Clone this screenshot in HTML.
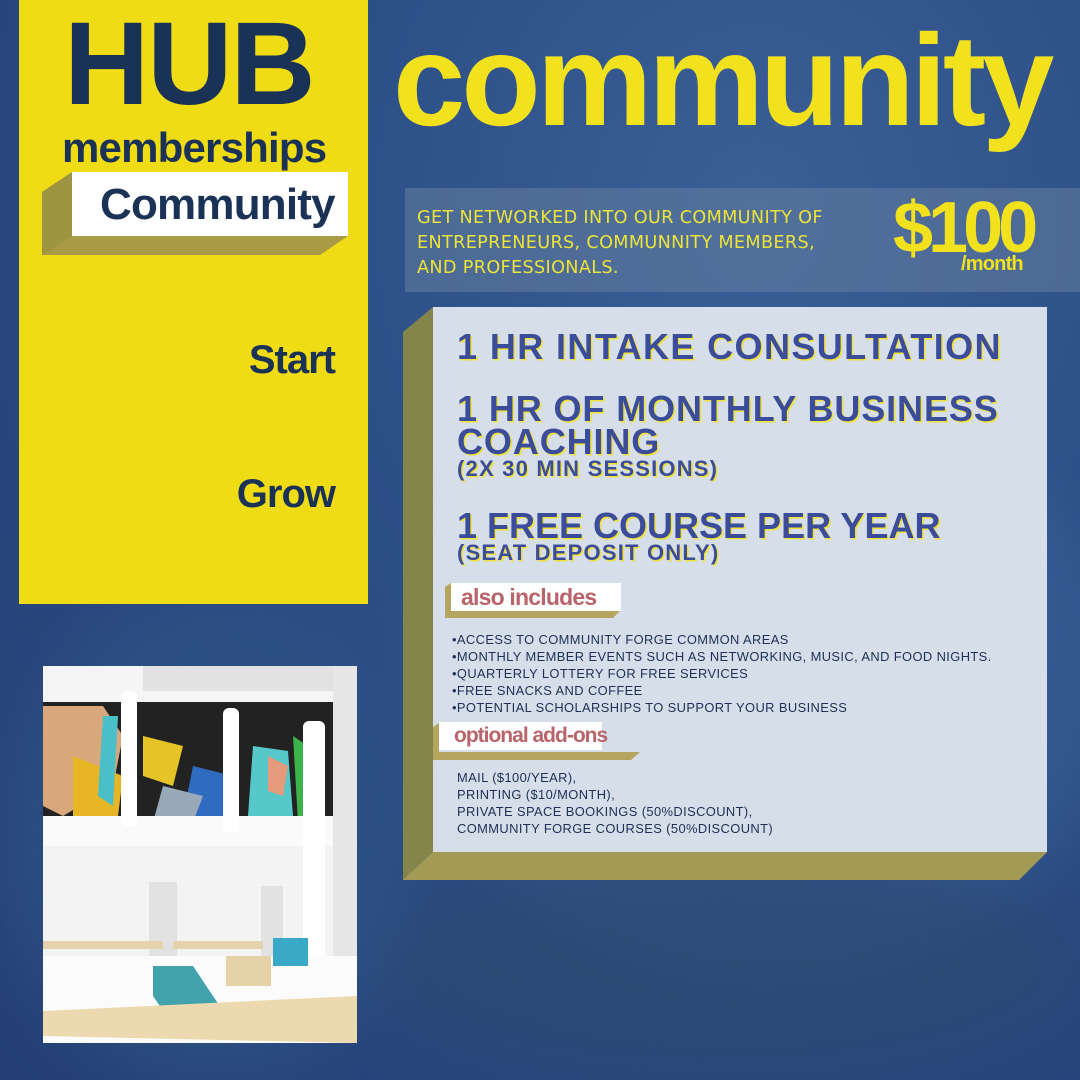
<!DOCTYPE html>
<html><head><meta charset="utf-8"><style>
*{margin:0;padding:0;box-sizing:border-box}
html,body{width:1080px;height:1080px;overflow:hidden}
body{position:relative;font-family:"Liberation Sans",sans-serif;
background:radial-gradient(ellipse at 70% 20%,#3b5f96 0%,#2d4f88 40%,#243f74 100%);}
.abs{position:absolute}
.bgs{position:absolute;border-radius:50%;filter:blur(30px);}
.yellow{left:19px;top:0;width:349px;height:604px;background:#f0dc14}
.navy{color:#1b3257;font-weight:bold}
.hub{left:64px;top:5px;font-size:118px;letter-spacing:-2px;line-height:118px;white-space:nowrap}
.mem{left:62px;top:126px;font-size:42px;letter-spacing:-.8px;line-height:44px;white-space:nowrap}
.nav{right:745px;font-size:40px;letter-spacing:-1px;text-align:right}
.ybig{color:#f2e21e;font-weight:bold;white-space:nowrap}
.band{left:405px;top:188px;width:675px;height:104px;background:rgba(100,125,160,.55)}
.desc{left:417px;top:206px;font-size:17.5px;line-height:25px;color:#ece437;letter-spacing:.3px;font-family:"DejaVu Sans Condensed","Liberation Sans Narrow",sans-serif;transform:scaleX(1.12);transform-origin:left;white-space:nowrap}
.panel{left:433px;top:307px;width:614px;height:545px;background:rgba(226,232,240,.93)}
.h{color:#3b4c9b;font-weight:bold;text-shadow:1.5px 1.5px 0 #efe23a;letter-spacing:1.2px;white-space:nowrap}
.tag{background:#fff;color:#b9636a;font-weight:bold;font-size:22px;letter-spacing:-.8px;padding:0 8px 0 10px;height:28px;line-height:28px;white-space:nowrap}
.li{font-size:12.9px;line-height:17px;color:#1f2f55;letter-spacing:.4px;white-space:nowrap}
</style></head><body>
<div class="bgs" style="left:420px;top:380px;width:700px;height:600px;background:#3c6299;opacity:.5"></div>
<div class="bgs" style="left:360px;top:850px;width:720px;height:230px;background:#2c4a72;opacity:.7"></div>
<div class="bgs" style="left:0;top:600px;width:420px;height:480px;background:#2f5486;opacity:.6"></div>

<div class="abs yellow"></div>
<div class="abs navy hub">HUB</div>
<div class="abs navy mem">memberships</div>
<svg class="abs" style="left:42px;top:172px" width="308" height="85"><polygon points="30,0 0,20 0,83 278,83 306,64 30,64" fill="#a99a45"/><polygon points="0,20 30,0 30,64 0,83" fill="#9c9440"/><rect x="30" y="0" width="276" height="64" fill="#fff"/></svg>
<div class="abs navy" style="left:100px;top:180px;font-size:44px;letter-spacing:-.8px;line-height:50px">Community</div>
<div class="abs navy nav" style="top:336px;line-height:48px">Start</div>
<div class="abs navy nav" style="top:470px;line-height:48px">Grow</div>

<div class="abs ybig" style="left:393px;top:5px;font-size:130px;letter-spacing:-4px;line-height:150px">community</div>

<div class="abs band"></div>
<div class="abs desc">GET NETWORKED INTO OUR COMMUNITY OF<br>ENTREPRENEURS, COMMUNNITY MEMBERS,<br>AND PROFESSIONALS.</div>
<div class="abs ybig" style="left:893px;top:186px;font-size:72px;letter-spacing:-5px;line-height:84px">$100</div>
<div class="abs ybig" style="left:961px;top:253px;font-size:20px;letter-spacing:-.8px">/month</div>

<svg class="abs" style="left:403px;top:307px" width="646" height="575"><polygon points="30,0 0,25 0,573 616,573 644,545 30,545" fill="#8c8a45" opacity=".92"/><polygon points="0,573 30,545 644,545 616,573" fill="#a29a55"/></svg>
<div class="abs panel"></div>
<div class="abs h" style="left:457px;top:327px;font-size:36px;letter-spacing:1.4px;line-height:40px">1 HR INTAKE CONSULTATION</div>
<div class="abs h" style="left:457px;top:392px;font-size:36px;letter-spacing:.9px;line-height:33px">1 HR OF MONTHLY BUSINESS<br>COACHING</div>
<div class="abs h" style="left:457px;top:456px;font-size:22px;line-height:26px">(2X 30 MIN SESSIONS)</div>
<div class="abs h" style="left:457px;top:507px;font-size:36px;letter-spacing:0;line-height:38px">1 FREE COURSE PER YEAR</div>
<div class="abs h" style="left:457px;top:540px;font-size:22px;line-height:26px">(SEAT DEPOSIT ONLY)</div>

<svg class="abs" style="left:445px;top:583px" width="180" height="40"><polygon points="6,0 0,4 0,35 168,35 175,28 6,28" fill="#b6a560"/></svg>
<div class="abs tag" style="left:451px;top:583px;width:170px;font-size:23px">also includes</div>
<div class="abs li" style="left:452px;top:631px">•ACCESS TO COMMUNITY FORGE COMMON AREAS<br>•MONTHLY MEMBER EVENTS SUCH AS NETWORKING, MUSIC, AND FOOD NIGHTS.<br>•QUARTERLY LOTTERY FOR FREE SERVICES<br>•FREE SNACKS AND COFFEE<br>•POTENTIAL SCHOLARSHIPS TO SUPPORT YOUR BUSINESS</div>
<svg class="abs" style="left:433px;top:723px" width="240" height="40"><polygon points="6,0 0,4 0,37 198,37 207,29 6,29" fill="#b6a560"/></svg>
<div class="abs tag" style="left:439px;top:722px;width:163px;padding-left:15px;font-size:21px;letter-spacing:-1px">optional add-ons</div>
<div class="abs li" style="left:457px;top:769px">MAIL ($100/YEAR),<br>PRINTING ($10/MONTH),<br>PRIVATE SPACE BOOKINGS (50%DISCOUNT),<br>COMMUNITY FORGE COURSES (50%DISCOUNT)</div>

<svg class="abs" style="left:43px;top:666px" width="314" height="377" viewBox="0 0 314 377">
<rect width="314" height="377" fill="#f3f3f3"/>
<rect x="0" y="36" width="290" height="120" fill="#222"/>
<path d="M0 40 L60 40 L80 70 L70 120 L20 150 L0 140Z" fill="#d9a77c"/>
<path d="M30 90 L80 110 L75 150 L30 150Z" fill="#e6b626"/>
<path d="M60 50 L75 50 L70 140 L55 130Z" fill="#49c0c7"/>
<path d="M100 70 L140 80 L130 120 L100 110Z" fill="#e6c326"/>
<path d="M150 100 L190 110 L180 150 L140 150Z" fill="#2f6cc0"/>
<path d="M120 120 L160 130 L150 156 L110 156Z" fill="#9aa9b8"/>
<path d="M210 80 L245 85 L250 150 L205 150Z" fill="#57c8c9"/>
<path d="M225 90 L245 100 L240 130 L225 125Z" fill="#e59a7b"/>
<path d="M250 70 L280 90 L270 156 L255 156Z" fill="#3bb24a"/>
<rect x="100" y="0" width="190" height="25" fill="#333"/>
<rect x="0" y="0" width="314" height="36" fill="#f5f5f5" opacity=".9"/>
<rect x="0" y="150" width="314" height="30" fill="#fafafa"/>
<rect x="78" y="25" width="16" height="135" rx="6" fill="#fff"/>
<rect x="180" y="42" width="16" height="125" rx="6" fill="#fff"/>
<rect x="260" y="55" width="22" height="250" rx="6" fill="#fff"/>
<rect x="290" y="0" width="24" height="377" fill="#e6e6e6"/>
<rect x="106" y="216" width="28" height="80" fill="#e2e2e2"/>
<rect x="218" y="220" width="22" height="80" fill="#e2e2e2"/>
<rect x="0" y="290" width="314" height="87" fill="#fbfbfb"/>
<rect x="0" y="275" width="120" height="8" fill="#e4d3ad"/>
<rect x="130" y="275" width="90" height="8" fill="#e4d3ad"/>
<path d="M110 300 L150 300 L180 345 L125 352 L110 330Z" fill="#43a3ad"/>
<rect x="183" y="290" width="45" height="30" fill="#e5d2a6"/>
<rect x="230" y="272" width="35" height="28" fill="#3aa9c7"/>
<path d="M0 370 L0 345 L314 330 L314 377Z" fill="#ecd9af"/>
</svg>
</body></html>
